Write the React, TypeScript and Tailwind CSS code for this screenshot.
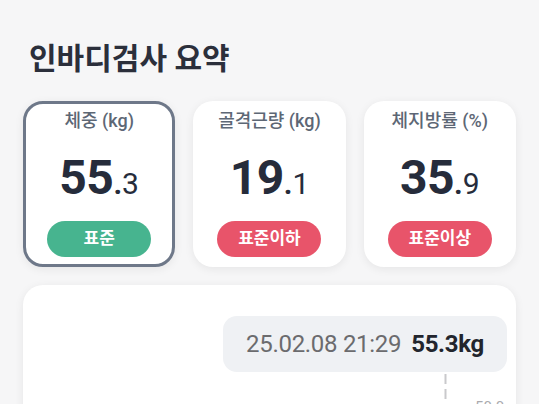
import React from "react";

interface Summary {
  label: string;
  whole: string;
  fraction: string;
  status: string;
  tone: "good" | "bad";
  selected?: boolean;
}

const items: Summary[] = [
  { label: "체중 (kg)", whole: "55", fraction: "3", status: "표준", tone: "good", selected: true },
  { label: "골격근량 (kg)", whole: "19", fraction: "1", status: "표준이하", tone: "bad" },
  { label: "체지방률 (%)", whole: "35", fraction: "9", status: "표준이상", tone: "bad" },
];

const font = { fontFamily: "Roboto, 'Noto Sans CJK KR', sans-serif" };

function SummaryCard({ item }: { item: Summary }) {
  return (
    <div
      className={
        "h-[166px] rounded-[20px] bg-white border-[3px] flex flex-col items-center shadow-[0_2px_10px_rgba(0,0,0,0.07)] " +
        (item.selected ? "border-[#6e7889]" : "border-transparent")
      }
    >
      <p className="mt-[5px] text-[18px] leading-[24px] font-medium text-[#5d6775]">{item.label}</p>
      <p className="mt-[21px] leading-[47px] text-[#262c3b] whitespace-nowrap">
        <span className="text-[48px] font-bold tracking-[-0.5px]">{item.whole}</span>
        <span className="text-[30px] font-bold">.</span>
        <span className="text-[30px] font-normal">{item.fraction}</span>
      </p>
      <div
        className={
          "mt-[9px] w-[104px] h-[36px] rounded-full flex items-center justify-center text-white text-[17px] font-bold " +
          (item.tone === "good" ? "bg-[#47b48f]" : "bg-[#e8546a]")
        }
      >
        {item.status}
      </div>
    </div>
  );
}

export default function App() {
  return (
    <div className="w-[539px] h-[404px] overflow-hidden bg-[#f6f6f7] px-[23px] pt-[39px]" style={font}>
      <h1 className="ml-[6px] text-[30px] leading-[40px] font-bold text-[#2b2f3b]">인바디검사 요약</h1>

      <div className="mt-[22px] grid grid-cols-3 gap-[18px]">
        {items.map((item, index) => (
          <SummaryCard item={item} key={index} />
        ))}
      </div>

      <div className="mt-[18px] h-[200px] rounded-[20px] bg-white shadow-[0_2px_10px_rgba(0,0,0,0.07)] pt-[31px] pr-[9px] flex flex-col items-end">
        <div className="h-[56px] w-[284px] rounded-[14px] bg-[#eff1f4] flex items-center justify-center gap-[10px] whitespace-nowrap">
          <span className="text-[24px] text-[#6b6b6e] tracking-[-0.3px]">25.02.08 21:29</span>
          <span className="text-[24px] font-bold text-[#22252d] tracking-[-0.3px]">55.3kg</span>
        </div>
        <div className="relative w-full h-[80px]">
          {/* chart cursor + axis label */}
          <svg className="absolute left-[421px] top-[2px]" width="3" height="80">
            <line x1="1.5" y1="0" x2="1.5" y2="80" stroke="#c9c9cc" strokeWidth="2" strokeDasharray="10 5" />
          </svg>
          <span className="absolute left-[452px] top-[25px] text-[15px] leading-[20px] text-[#aaaaae]">50.0</span>
        </div>
      </div>
    </div>
  );
}
